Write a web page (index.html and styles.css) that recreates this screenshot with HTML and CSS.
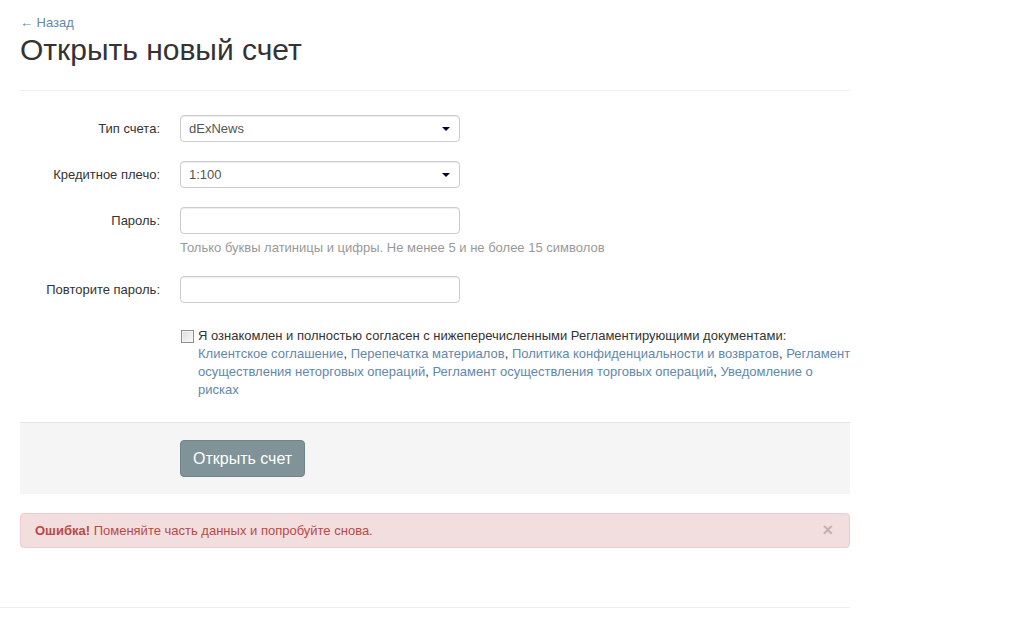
FILE: index.html
```html
<!DOCTYPE html>
<html lang="ru">
<head>
    <meta charset="UTF-8">
    <title>Открыть новый счет</title>
    <link rel="stylesheet" href="styles.css">
</head>
<body>

    <div class="page">
        <!-- Header -->
        <a class="back-link" href="#">&larr; Назад</a>
        <h1 class="page-title">Открыть новый счет</h1>
        <hr class="divider">

        <!-- Form -->
        <form class="account-form">
            <div class="form-row">
                <label class="form-label">Тип счета:</label>
                <div class="form-control-wrap">
                    <div class="select-wrap">
                        <select class="form-select">
                            <option>dExNews</option>
                        </select>
                    </div>
                </div>
            </div>

            <div class="form-row">
                <label class="form-label">Кредитное плечо:</label>
                <div class="form-control-wrap">
                    <div class="select-wrap">
                        <select class="form-select">
                            <option>1:100</option>
                        </select>
                    </div>
                </div>
            </div>

            <div class="form-row form-row-help">
                <label class="form-label">Пароль:</label>
                <div class="form-control-wrap">
                    <input class="form-input" type="password">
                    <p class="help-text">Только буквы латиницы и цифры. Не менее 5 и не более 15 символов</p>
                </div>
            </div>

            <div class="form-row">
                <label class="form-label">Повторите пароль:</label>
                <div class="form-control-wrap">
                    <input class="form-input" type="password">
                </div>
            </div>

            <div class="form-row form-row-agree">
                <div class="form-label"></div>
                <label class="agree">
                    <input class="agree-box" type="checkbox">
                    Я ознакомлен и полностью согласен с нижеперечисленными Регламентирующими документами:<br>
                    <a href="#">Клиентское соглашение</a>, <a href="#">Перепечатка материалов</a>, <a href="#">Политика конфиденциальности и возвратов</a>, <a href="#">Регламент осуществления неторговых операций</a>, <a href="#">Регламент осуществления торговых операций</a>, <a href="#">Уведомление о рисках</a>
                </label>
            </div>

            <div class="form-actions">
                <button class="btn-submit" type="button">Открыть счет</button>
            </div>
        </form>

        <!-- Error -->
        <div class="alert-error">
            <strong>Ошибка!</strong> Поменяйте часть данных и попробуйте снова.
            <span class="alert-close">&times;</span>
        </div>
    </div>

    <div class="footer-line"></div>

</body>
</html>
```

FILE: styles.css
```css
 body {
     font-family: "Liberation Sans", Arial, sans-serif;
     font-size: 13px;
     line-height: 18px;
     color: #333;
     margin: 0;
     background: #fff;
 }

 a {
     color: #6287ad;
     text-decoration: none;
 }

 .page {
     width: 830px;
     padding: 14px 0 0 20px;
 }

 /* Header */
 .back-link {
     display: inline-block;
     line-height: 18px;
 }
 .page-title {
     font-size: 30px;
     font-weight: normal;
     line-height: 36px;
     margin: 0;
     color: #333;
 }
 .divider {
     border: none;
     border-top: 1px solid #eee;
     margin: 22px 0 24px;
 }

 /* Form */
 .form-row {
     display: flex;
     align-items: flex-start;
     gap: 20px;
     margin-bottom: 19px;
 }
 .form-label {
     width: 140px;
     flex-shrink: 0;
     text-align: right;
     line-height: 27px;
 }
 .form-control-wrap {
     width: 280px;
 }
 .select-wrap {
     position: relative;
 }
 .select-wrap::after {
     content: "";
     position: absolute;
     right: 10px;
     top: 12px;
     border-left: 4px solid transparent;
     border-right: 4px solid transparent;
     border-top: 4px solid #000033;
     pointer-events: none;
 }
 .form-select,
 .form-input {
     display: block;
     width: 100%;
     height: 27px;
     box-sizing: border-box;
     padding: 0 8px;
     font-family: inherit;
     font-size: 13px;
     color: #555;
     background: #fff;
     border: 1px solid #ccc;
     border-radius: 4px;
     box-shadow: inset 0 1px 1px rgba(0, 0, 0, 0.075);
     outline: none;
 }
 .form-select {
     -webkit-appearance: none;
     appearance: none;
 }
 .help-text {
     margin: 5px 0 0;
     color: #999;
     white-space: nowrap;
 }
 .form-row-agree {
     margin-top: 24px;
     margin-bottom: 23px;
 }
 .agree {
     position: relative;
     display: block;
     flex-shrink: 0;
     width: 658px;
     margin-right: -10px;
     padding-left: 18px;
 }
 .agree-box {
     -webkit-appearance: none;
     appearance: none;
     position: absolute;
     left: 1px;
     top: 3px;
     width: 13px;
     height: 13px;
     margin: 0;
     box-sizing: border-box;
     border: 1px solid #8e8f8f;
     background: linear-gradient(135deg, #dcdcdc, #fbfbfb);
     box-shadow: inset 0 0 0 1px #f4f4f4;
 }

 .form-actions {
     background: #f5f5f5;
     border-top: 1px solid #e5e5e5;
     padding: 17px 0 17px 160px;
 }
 .btn-submit {
     height: 37px;
     padding: 0 12px;
     font-family: inherit;
     font-size: 16px;
     color: #fff;
     background: #7f9399;
     border: 1px solid #6f8389;
     border-radius: 4px;
     cursor: pointer;
 }

 /* Error */
 .alert-error {
     position: relative;
     margin-top: 19px;
     padding: 8px 35px 7px 14px;
     color: #b94a48;
     background: #f2dede;
     border: 1px solid #ebccd1;
     border-radius: 4px;
 }
 .alert-close {
     position: absolute;
     right: 16px;
     top: 7px;
     font-size: 18px;
     font-weight: bold;
     color: #000;
     opacity: 0.2;
 }

 .footer-line {
     width: 850px;
     border-top: 1px solid #eee;
     margin-top: 59px;
 }
```
